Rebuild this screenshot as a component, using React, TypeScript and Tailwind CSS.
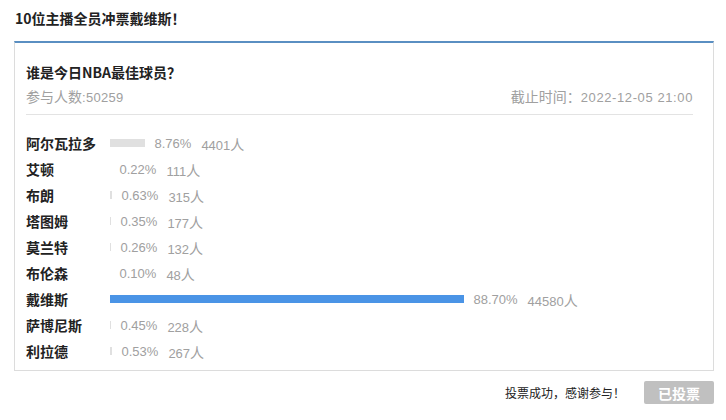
import React from "react";

const CJK = "font-['Noto_Sans_CJK_SC',sans-serif]";
const NUM = "font-['Liberation_Sans','Noto_Sans_CJK_SC',sans-serif]";

const rows = [
  { name: "阿尔瓦拉多", pct: "8.76", count: "4401" },
  { name: "艾顿", pct: "0.22", count: "111" },
  { name: "布朗", pct: "0.63", count: "315" },
  { name: "塔图姆", pct: "0.35", count: "177" },
  { name: "莫兰特", pct: "0.26", count: "132" },
  { name: "布伦森", pct: "0.10", count: "48" },
  { name: "戴维斯", pct: "88.70", count: "44580", top: true },
  { name: "萨博尼斯", pct: "0.45", count: "228" },
  { name: "利拉德", pct: "0.53", count: "267" },
];

export default function App() {
  return (
    <div className={`w-[726px] h-[420px] bg-white ${CJK}`}>
      <div className="h-[36px] pl-[15px] flex items-center text-[14px] font-bold text-[#222] leading-none">
        10位主播全员冲票戴维斯！
      </div>
      <div className="ml-[14px] mt-[5px] w-[700px] h-[330px] border-t-2 border-t-[#5a8fc2] border-x border-b border-[#dcdcdc] pl-[11px] pr-[20px]">
        <div className="pt-[19px] h-[39px] flex items-center text-[14px] font-bold text-[#222] leading-[20px]">
          谁是今日NBA最佳球员？
        </div>
        <div className="mt-[5px] h-[20px] flex items-center justify-between text-[14px] text-[#a0a0a0] leading-[20px]">
          <span>
            参与人数<span className={`${NUM} text-[13px] tracking-[0.3px]`}>:50259</span>
          </span>
          <span>
            截止时间：<span className={`${NUM} text-[13px] tracking-[0.6px]`}>2022-12-05 21:00</span>
          </span>
        </div>
        <div className="h-[8px] border-b border-[#e3e3e3]" />
        <div className="pt-[15px] flex flex-col">
          {rows.map((r) => (
            <div key={r.name} className="h-[26px] flex items-center">
              <div className="w-[84px] text-[14px] font-bold text-[#222] leading-none">{r.name}</div>
              <div
                className={`h-[8px] ${r.top ? "bg-[#4a94e6]" : "bg-[#e0e0e0]"}`}
                style={{ width: `${Math.floor((parseFloat(r.pct) / 100) * 400)}px` }}
              />
              <span className={`ml-[9.5px] ${NUM} text-[13px] text-[#a0a0a0] leading-none`}>{r.pct}%</span>
              <span className="ml-[10px] text-[#a0a0a0] leading-none">
                <span className={`${NUM} text-[13px]`}>{r.count}</span>
                <span className="text-[14px]">人</span>
              </span>
            </div>
          ))}
        </div>
      </div>
      <div className="mt-[10px] h-[23px] flex items-center justify-end pr-[12px]">
        <span className="text-[12px] text-[#222] mr-[19px]">投票成功，感谢参与！</span>
        <button className="w-[70px] h-[23px] rounded-[2px] bg-[#c0c0c0] text-white text-[14px] font-bold leading-none flex items-center justify-center">
          已投票
        </button>
      </div>
    </div>
  );
}
